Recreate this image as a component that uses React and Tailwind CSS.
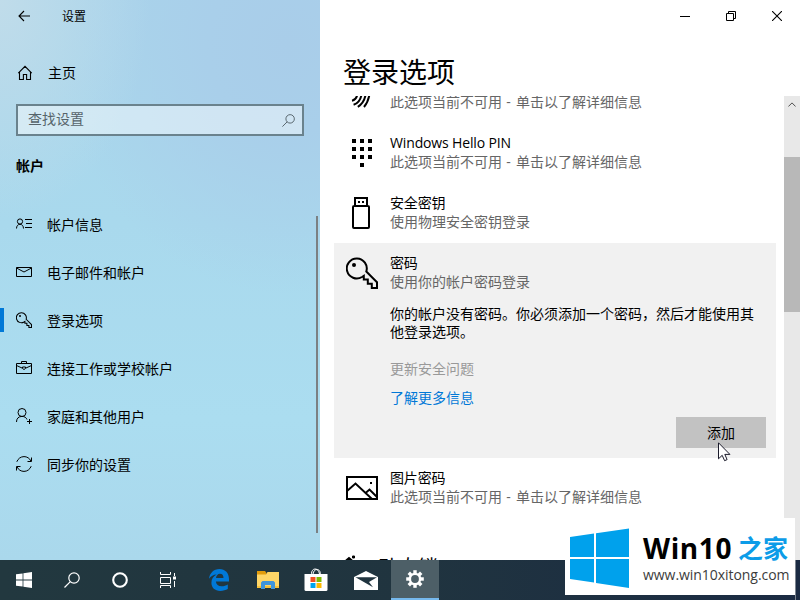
import React from "react";

const UNAVAILABLE = (
  <>
    此选项当前不可用<span className="tracking-[0.700px]"> - </span>单击以了解详细信息
  </>
);

const Icon = ({ w = 16, h = 16, sw = 1, className = "", children }) => (
  <svg
    width={w}
    height={h}
    viewBox={`0 0 ${w} ${h}`}
    fill="none"
    stroke="currentColor"
    strokeWidth={sw}
    className={`shrink-0 ${className}`}
  >
    {children}
  </svg>
);

const BackIcon = () => (
  <Icon w={14} h={12}>
    <path d="M12 6H1M6 1L1 6l5 5" strokeWidth="1.1" />
  </Icon>
);

const HomeIcon = () => (
  <Icon w={16} h={16}>
    <path d="M1.3 8.2L8 1.3l6.7 6.9M2.5 7v7.5h3.9V9.5h3.2v5h3.9V7" strokeWidth="1.1" />
  </Icon>
);

const SearchIcon = ({ size = 12 }) => (
  <svg width={size} height={size} viewBox="0 0 16 16" fill="none" stroke="currentColor" strokeWidth="1.2" className="shrink-0">
    <circle cx="10" cy="6" r="5.2" />
    <path d="M6.3 9.7L.5 15.5" />
  </svg>
);

const AccountIcon = () => (
  <Icon>
    <circle cx="4" cy="5.5" r="2.6" />
    <path d="M.5 12.5c0-2.600 1.500-4.200 3.500-4.200s3.500 1.600 3.500 4.200M9 3.500h7M10 7.500h6M9 11.500h7" />
  </Icon>
);

const MailIcon = () => (
  <Icon>
    <path d="M.5 3.500h15v9H.5zM.5 4l7.500 4 7.500-4" />
  </Icon>
);

const KeyIcon = ({ size = 16, sw = 2.1 }) => (
  <svg width={size} height={size} viewBox="0 0 32 32" fill="none" stroke="currentColor" strokeWidth={sw} className="shrink-0">
    <path d="M20.300 14.500L31 25.200V31h-5.200v-4.200h-4v-4.400h-4v-3.600L16 20A10 10 0 1 1 20.300 14.500z" />
    <circle cx="8" cy="8" r="2" fill="currentColor" stroke="none" />
  </svg>
);

const BriefcaseIcon = () => (
  <Icon>
    <path d="M.5 3.500h15v10H.5zM5.500 3.500v-2h5v2M.5 5.500l5.500 2.500M10 8l5.500-2.500M6.500 7h3v1.500l-1.500 1-1.500-1z" />
  </Icon>
);

const FamilyIcon = () => (
  <Icon>
    <circle cx="6" cy="4.500" r="4" />
    <path d="M.5 14c0-3.500 2-5.600 5.500-5.600 2.500 0 4.300 1.200 5 3.100M11 13.500h5M13.500 11v5" />
  </Icon>
);

const SyncIcon = () => (
  <Icon>
    <path d="M.8 5.800C2 2.700 4.700.6 8 .6c3 0 5.600 1.600 6.900 4.400M15.500 1.500v4h-4M15.200 10.200c-1.200 3.100-3.900 5.200-7.200 5.200-3 0-5.600-1.600-6.900-4.400M.5 14.500v-4h4" />
  </Icon>
);

const FingerprintIcon = () => (
  <Icon w={32} h={32} sw={2}>
    <path d="M6 23.700c2.600-.5 4.500-2.300 5.200-5.700M7.600 27.800c4.200-1.400 7.200-5 8-10.800M11.800 29.800c4.400-2.600 7-6.800 7.900-12.800M18 30c3-3.500 4.700-7.500 5.500-13" />
  </Icon>
);

const PinIcon = () => (
  <svg width="32" height="32" viewBox="0 0 32 32" fill="currentColor" className="shrink-0">
    {[0, 8, 16].map((y) =>
      [6, 14, 22].map((x) => <rect key={`${x}-${y}`} x={x} y={y + 2} width="4" height="4" />)
    )}
    <rect x="14" y="26" width="4" height="4" />
  </svg>
);

const UsbIcon = () => (
  <Icon w={32} h={32} sw={2}>
    <path d="M9 9V1h12v8M8 9h14q1 0 1 1v20q0 1-1 1H8q-1 0-1-1V10q0-1 1-1z" />
    <path d="M12 4h2v2h-2zM16 4h2v2h-2z" fill="currentColor" stroke="none" />
  </Icon>
);

const PictureIcon = () => (
  <Icon w={32} h={32} sw={2}>
    <path d="M1 5h30v22H1zM1 19l8.500-7.500L26 27M19 21.500l4.500-4L31 25" />
    <path d="M24 10h2v2h-2z" fill="currentColor" stroke="none" />
  </Icon>
);

const navItems = [
  { label: "帐户信息", icon: <AccountIcon /> },
  { label: "电子邮件和帐户", icon: <MailIcon /> },
  { label: "登录选项", icon: <KeyIcon />, active: true },
  { label: "连接工作或学校帐户", icon: <BriefcaseIcon /> },
  { label: "家庭和其他用户", icon: <FamilyIcon /> },
  { label: "同步你的设置", icon: <SyncIcon /> },
];

function Sidebar() {
  return (
    <aside className="flex w-[320px] shrink-0 flex-col bg-[radial-gradient(150px_220px_at_0%_0%,#c0dcea_0%,transparent_100%),radial-gradient(230px_250px_at_90%_8%,#a9cde9_0%,#a9cfea_35%,transparent_100%),linear-gradient(180deg,#a9d5eb_0%,#a9d9ed_40%,#abddf0_75%,#aad8ec_100%)]">
      <header className="flex h-8 items-center pl-[18px] text-xs">
        <BackIcon />
        <span className="mt-0.5 ml-[30px]">设置</span>
      </header>
      <div className="mt-[17px] flex h-12 items-center pl-[17px]">
        <HomeIcon />
        <span className="ml-[15px]">主页</span>
      </div>
      <div className="mx-4 mt-[7px] flex h-8 items-center justify-between border-2 border-[#6a828d] bg-white/45 pr-[7px] pl-[10px] text-[#56646b]">
        <span className="-mt-0.5">查找设置</span>
        <SearchIcon size={13} />
      </div>
      <h2 className="mt-[20px] pl-4 text-sm leading-5 font-bold">帐户</h2>
      <div className="mt-[25px] flex">
        <nav className="flex-1">
          {navItems.map((item) => (
            <div key={item.label} className="flex h-12 items-center">
              <span className={item.active ? "-mt-0.5 h-6 w-1 bg-[#0078d7]" : "h-6 w-1"} />
              <span className="-mt-0.5 ml-3">{item.icon}</span>
              <span className="-mt-px ml-[15px]">{item.label}</span>
            </div>
          ))}
        </nav>
        <div className="mt-[15px] mr-[2px] h-[317px] w-[2px] bg-[#7b8083]" />
      </div>
    </aside>
  );
}

function OptionRow({ icon, title, detail, children }) {
  return (
    <div className="flex px-3 py-[11px]">
      <div className="flex h-[38px] w-11 shrink-0 items-center">{icon}</div>
      <div className="-mt-px min-w-0 flex-1">
        <div className="tracking-[-0.010em]">{title}</div>
        <div className="text-[#666666]">{detail}</div>
        {children}
      </div>
    </div>
  );
}

function WindowButtons() {
  return (
    <div className="flex h-8 justify-end">
      <div className="flex w-[46px] items-center justify-center">
        <Icon w={10} h={10}><path d="M0 5.500h10" /></Icon>
      </div>
      <div className="flex w-[46px] items-center justify-center">
        <Icon w={10} h={10}><path d="M.5 2.500h7v7h-7zM2.500 2.500v-2h7v7h-2" /></Icon>
      </div>
      <div className="flex w-[46px] items-center justify-center">
        <Icon w={10} h={10}><path d="M0 0l10 10M10 0L0 10" strokeWidth="1.100" /></Icon>
      </div>
    </div>
  );
}

function Content() {
  return (
    <main className="flex flex-1 flex-col bg-white">
      <WindowButtons />
      <h1 className="flex h-16 items-center pt-[15px] pl-[23px] text-[28px] leading-[40px]">登录选项</h1>
      <div className="flex h-[464px] justify-between overflow-hidden pl-[14px]">
        <div className="-mt-[33px] w-[442px] leading-[19px]">
          <OptionRow icon={<FingerprintIcon />} title="" detail={<div className="pt-[19px]">{UNAVAILABLE}</div>} />
          <OptionRow icon={<PinIcon />} title="Windows Hello PIN" detail={UNAVAILABLE} />
          <OptionRow icon={<UsbIcon />} title="安全密钥" detail="使用物理安全密钥登录" />
          <div className="h-[215px] bg-[#f1f1f1]">
            <OptionRow icon={<KeyIcon size={32} sw={2} />} title="密码" detail="使用你的帐户密码登录">
              <p className="mt-[14px] -mr-2 leading-[18px]">
                你的帐户没有密码。你必须添加一个密码，然后才能使用其
                <br />
                他登录选项。
              </p>
              <div className="mt-[18px] text-[#999999]">更新安全问题</div>
              <div className="mt-[10px] text-[#0078d7]">了解更多信息</div>
              <button className="mt-[10px] -mr-[2px] ml-auto block h-[31px] w-[90px] bg-[#c2c2c2]">添加</button>
            </OptionRow>
          </div>
          <OptionRow icon={<PictureIcon />} title="图片密码" detail={UNAVAILABLE} />
          <div className="mt-[35px] flex items-start pl-[10px] text-xl leading-[30px]">
            <Icon w={20} h={20} sw={2} className="mt-[2px]">
              <path d="M1 6.500l4-3.500 4 3.500M8 2h3M9.500 .5v3M3 7v9h12" />
            </Icon>
            <span className="ml-[14px]">动态锁</span>
          </div>
        </div>
        <div className="flex w-4 flex-col bg-[#e8e8e8]">
          <div className="flex h-4 items-center justify-center text-[#505050]">
            <Icon w={8} h={5}><path d="M.4 4.500L4 .9l3.600 3.600" /></Icon>
          </div>
          <div className="mt-[45px] h-[155px] bg-[#b8b8b8]" />
        </div>
      </div>
    </main>
  );
}

const WindowsLogo = ({ size = 16 }) => (
  <svg width={size} height={size} viewBox="0 0 16 16" fill="currentColor">
    <path d="M0 2.300L6.600 1.400v6.200H0zM7.400 1.300L16 0v7.600H7.400zM0 8.400h6.600v6.200L0 13.700zM7.400 8.400H16V16l-8.600-1.300z" />
  </svg>
);

const TaskViewIcon = () => (
  <Icon w={16} h={16}>
    <path d="M.5 0v2.500h10V0M.5 5.500h10v6H.5zM.5 16v-2.500h10V16M14.500 1v3M14.500 9v6" />
    <path d="M13 4.500h3v3h-3z" fill="currentColor" stroke="none" />
  </Icon>
);

const EdgeIcon = () => (
  <svg width="20" height="22" viewBox="0 0 20 22">
    <path
      fill="#0078d7"
      d="M0 9.800C.6 4 4.800 0 10.400 0 16.300 0 20 4.200 20 10v2.600H6.900c.2 3 2.500 4.700 5.700 4.700 2.300 0 4.400-.6 6.200-1.800v4.600c-2.100 1.200-4.600 1.800-7.500 1.800C5.800 21.900 2.400 18.500 2.400 13.700c0-3.700 2-6.600 5.200-8.200C4.500 5.600 1.800 7.200 0 9.800zM7 9h7.500c0-2.700-1.300-4.200-3.600-4.200C8.800 4.800 7.400 6.400 7 9z"
    />
  </svg>
);

const FolderIcon = () => (
  <svg width="22" height="18" viewBox="0 0 22 18">
    <path fill="#e29c0c" d="M0 0h8l1.500 2v2H0z" />
    <path fill="#ffd667" d="M0 3.500h9L10.500 1H22v16H0z" />
    <path fill="#f7c13a" d="M0 15h22v2H0z" />
    <path fill="#3f95dc" d="M4 18v-6.500L5.500 10h11l1.500 1.500V18h-4v-4H8v4z" />
  </svg>
);

const StoreIcon = () => (
  <svg width="24" height="24" viewBox="0 0 24 24">
    <path d="M7.500 7V5.500C7.500 3 9 1 11 1s4 1.500 4.500 5M9 6c.5-3 2-4.500 4-4.500S16.500 3 16.500 7" fill="none" stroke="#fff" />
    <path fill="#fff" d="M.5 6h23v15.500q0 1.500-1.500 1.500H2Q.5 23 .5 21.500z" />
    <path fill="#f25022" d="M6.500 9h5v5h-5z" />
    <path fill="#7fba00" d="M12.500 9h5v5h-5z" />
    <path fill="#00a4ef" d="M6.500 15h5v5h-5z" />
    <path fill="#ffb900" d="M12.500 15h5v5h-5z" />
  </svg>
);

const MailAppIcon = () => (
  <svg width="24" height="19" viewBox="0 0 24 19">
    <path fill="#fff" fillRule="evenodd" d="M12 0L24 6v13H0V6zM1.500 6.300L12 12.200l7 4-4-5.200 8-4.700z" />
  </svg>
);

const GearIcon = () => (
  <svg width="18" height="18" viewBox="-9 -9 18 18">
    {[0, 45, 90, 135, 180, 225, 270, 315].map((a) => (
      <rect key={a} x="-1.700" y="-8.800" width="3.400" height="3.500" fill="#fff" transform={`rotate(${a})`} />
    ))}
    <circle r="5.100" fill="none" stroke="#fff" strokeWidth="2.400" />
  </svg>
);

function Taskbar() {
  return (
    <footer className="flex h-10 bg-linear-to-r from-[#22383f] via-[#20343f] to-[#1b2b43] text-white">
      <div className="flex w-12 items-center justify-center"><WindowsLogo /></div>
      <div className="flex w-12 items-center justify-center"><SearchIcon size={16} /></div>
      <div className="flex w-12 items-center justify-center">
        <Icon><circle cx="8" cy="8" r="6.800" strokeWidth="2.100" /></Icon>
      </div>
      <div className="flex w-12 items-center justify-center"><TaskViewIcon /></div>
      <div className="flex w-[54px] items-center justify-center"><EdgeIcon /></div>
      <div className="flex w-[43px] items-center justify-center"><FolderIcon /></div>
      <div className="flex w-[54px] items-center justify-center"><StoreIcon /></div>
      <div className="flex w-[45px] items-center justify-center"><MailAppIcon /></div>
      <div className="ml-[3px] flex w-12 items-center justify-center border-b-2 border-[#76b9ed] bg-[#4d5f67]"><GearIcon /></div>
      <div className="mr-1 ml-auto w-px bg-[#7d858f]" />
    </footer>
  );
}

function SiteBadge() {
  return (
    <div className="absolute top-[518px] left-[565px] flex h-[77px] w-[230px] bg-white pt-[10px] pl-[5px]">
      <svg width="60" height="60" viewBox="0 0 60 60" fill="#00a1ec" className="shrink-0">
        <path d="M0 9l24-3.500V29H0zM26 5.200L59 .5V29H26zM0 31h24v23.500L0 51zM26 31h33v29l-33-5z" />
      </svg>
      <div className="ml-[13px] whitespace-nowrap">
        <div className="mt-[4px] flex h-[32px] items-center font-bold">
          <span className="font-['Open_Sans','Noto_Sans',sans-serif] text-[28px] leading-8 tracking-[0.600px] text-black">Win10</span>
          <span className="ml-[6px] text-[25px] leading-8 text-[#0c9ce8]">之家</span>
        </div>
        <div className="mt-px font-['Open_Sans','Noto_Sans',sans-serif] text-[14px] leading-5 tracking-[-0.050px] text-[#3c3c3c]">www.win10xitong.com</div>
      </div>
    </div>
  );
}

const Cursor = () => (
  <svg width="13" height="20" viewBox="0 0 13 20" className="absolute top-[442px] left-[718px]">
    <path d="M.5.800v16l3.700-3.500 2.400 5.400 2.500-1.100-2.300-5.200h5.100z" fill="#fff" stroke="#1a1a2a" />
  </svg>
);

export default function App() {
  return (
    <div className="relative flex h-[600px] w-[800px] flex-col overflow-hidden font-['Open_Sans','Noto_Sans_CJK_SC',sans-serif] text-sm text-black">
      <div className="flex h-[560px]">
        <Sidebar />
        <Content />
      </div>
      <Taskbar />
      <SiteBadge />
      <Cursor />
    </div>
  );
}
